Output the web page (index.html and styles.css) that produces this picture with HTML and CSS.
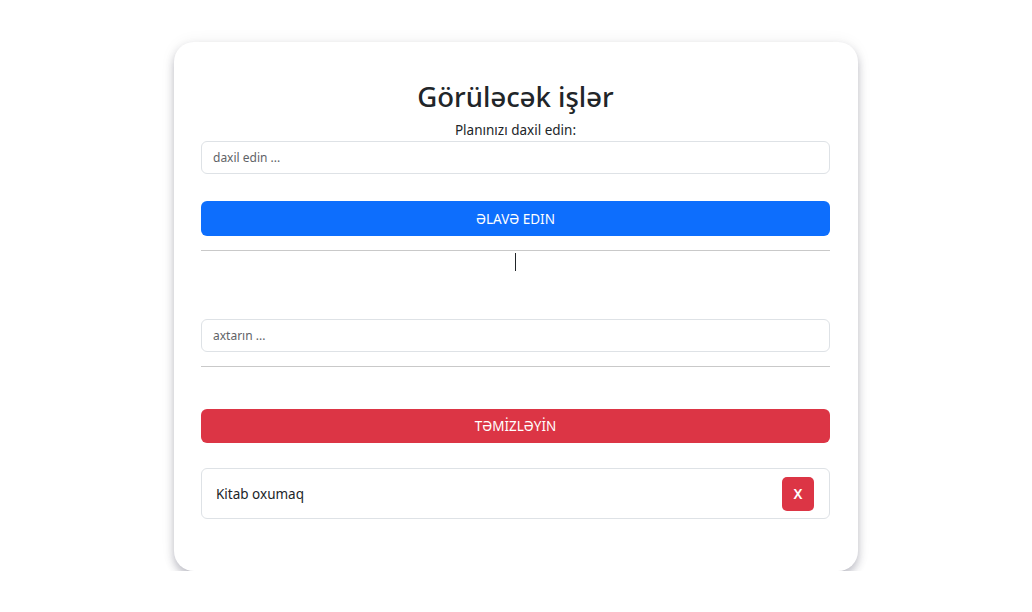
FILE: index.html
```html
<!DOCTYPE html>
<html lang="az">
<head>
<meta charset="utf-8">
<title>Görüləcək işlər</title>
<link rel="stylesheet" href="styles.css">
</head>
<body>
<main class="card">
  <h2 class="title">Görüləcək işlər</h2>
  <label class="label" for="plan">Planınızı daxil edin:</label>
  <input id="plan" class="field" type="text" placeholder="daxil edin ...">
  <button class="btn btn-primary" type="button">ƏLAVƏ EDIN</button>
  <hr class="rule rule-top">
  <div class="caret-row"><span class="caret"></span></div>
  <input class="field field-search" type="text" placeholder="axtarın ...">
  <hr class="rule rule-bottom">
  <button class="btn btn-danger" type="button">TƏMİZLƏYİN</button>
  <ul class="list">
    <li class="item">
      <span class="item-text">Kitab oxumaq</span>
      <button class="btn-x" type="button">X</button>
    </li>
  </ul>
</main>
</body>
</html>
```

FILE: styles.css
```css
* { box-sizing: border-box; }
html, body { margin: 0; padding: 0; background: #fff; }
body {
  font-family: "Noto Sans", "Open Sans", sans-serif;
  color: #212529;
}
.card {
  width: 684px;
  margin: 42px auto 0;
  padding: 37px 28px 52px 27px;
  background: #fff;
  border-radius: 20px;
  box-shadow: 0 5px 8px rgba(40, 40, 70, 0.28), 0 0 16px rgba(0, 0, 0, 0.06);
  display: flex;
  flex-direction: column;
}
.title {
  margin: 0;
  font-size: 27.5px;
  font-weight: 500;
  line-height: 36px;
  text-align: center;
}
.label {
  display: block;
  margin-top: 5px;
  font-size: 13.5px;
  line-height: 21px;
  text-align: center;
}
.field {
  display: block;
  width: 100%;
  height: 33px;
  padding: 0 11px;
  border: 1px solid #dee2e6;
  border-radius: 6px;
  font-family: inherit;
  font-size: 12px;
  color: #212529;
  background: #fff;
  outline: none;
}
.field::placeholder { color: #5f6367; opacity: 1; }
.btn {
  display: block;
  width: 100%;
  height: 35px;
  border: 0;
  border-radius: 6px;
  font-family: inherit;
  font-size: 13.5px;
  color: #fff;
  text-align: center;
  margin-top: 27px;
}
.btn-primary { background: #0d6efd; }
.btn-danger { background: #dc3545; margin-top: 42px; height: 34px; }
.rule {
  margin: 14px 0 0;
  border: 0;
  border-top: 1px solid #c9c9c9;
}
.caret-row {
  display: flex;
  justify-content: center;
  padding-top: 2px;
  height: 48px;
}
.caret {
  display: block;
  width: 1px;
  height: 18px;
  background: #212529;
  margin-right: 1px;
}
.field-search { margin-top: 20px; }
.list {
  list-style: none;
  margin: 25px 0 0;
  padding: 0;
}
.item {
  display: flex;
  align-items: center;
  justify-content: space-between;
  height: 51px;
  padding: 0 15px 0 14px;
  border: 1px solid #dee2e6;
  border-radius: 6px;
}
.item-text { font-size: 13.5px; }
.btn-x {
  width: 32px;
  height: 34px;
  border: 0;
  border-radius: 5px;
  background: #dc3545;
  color: #fff;
  font-family: inherit;
  font-size: 14px;
  font-weight: 600;
}
```
